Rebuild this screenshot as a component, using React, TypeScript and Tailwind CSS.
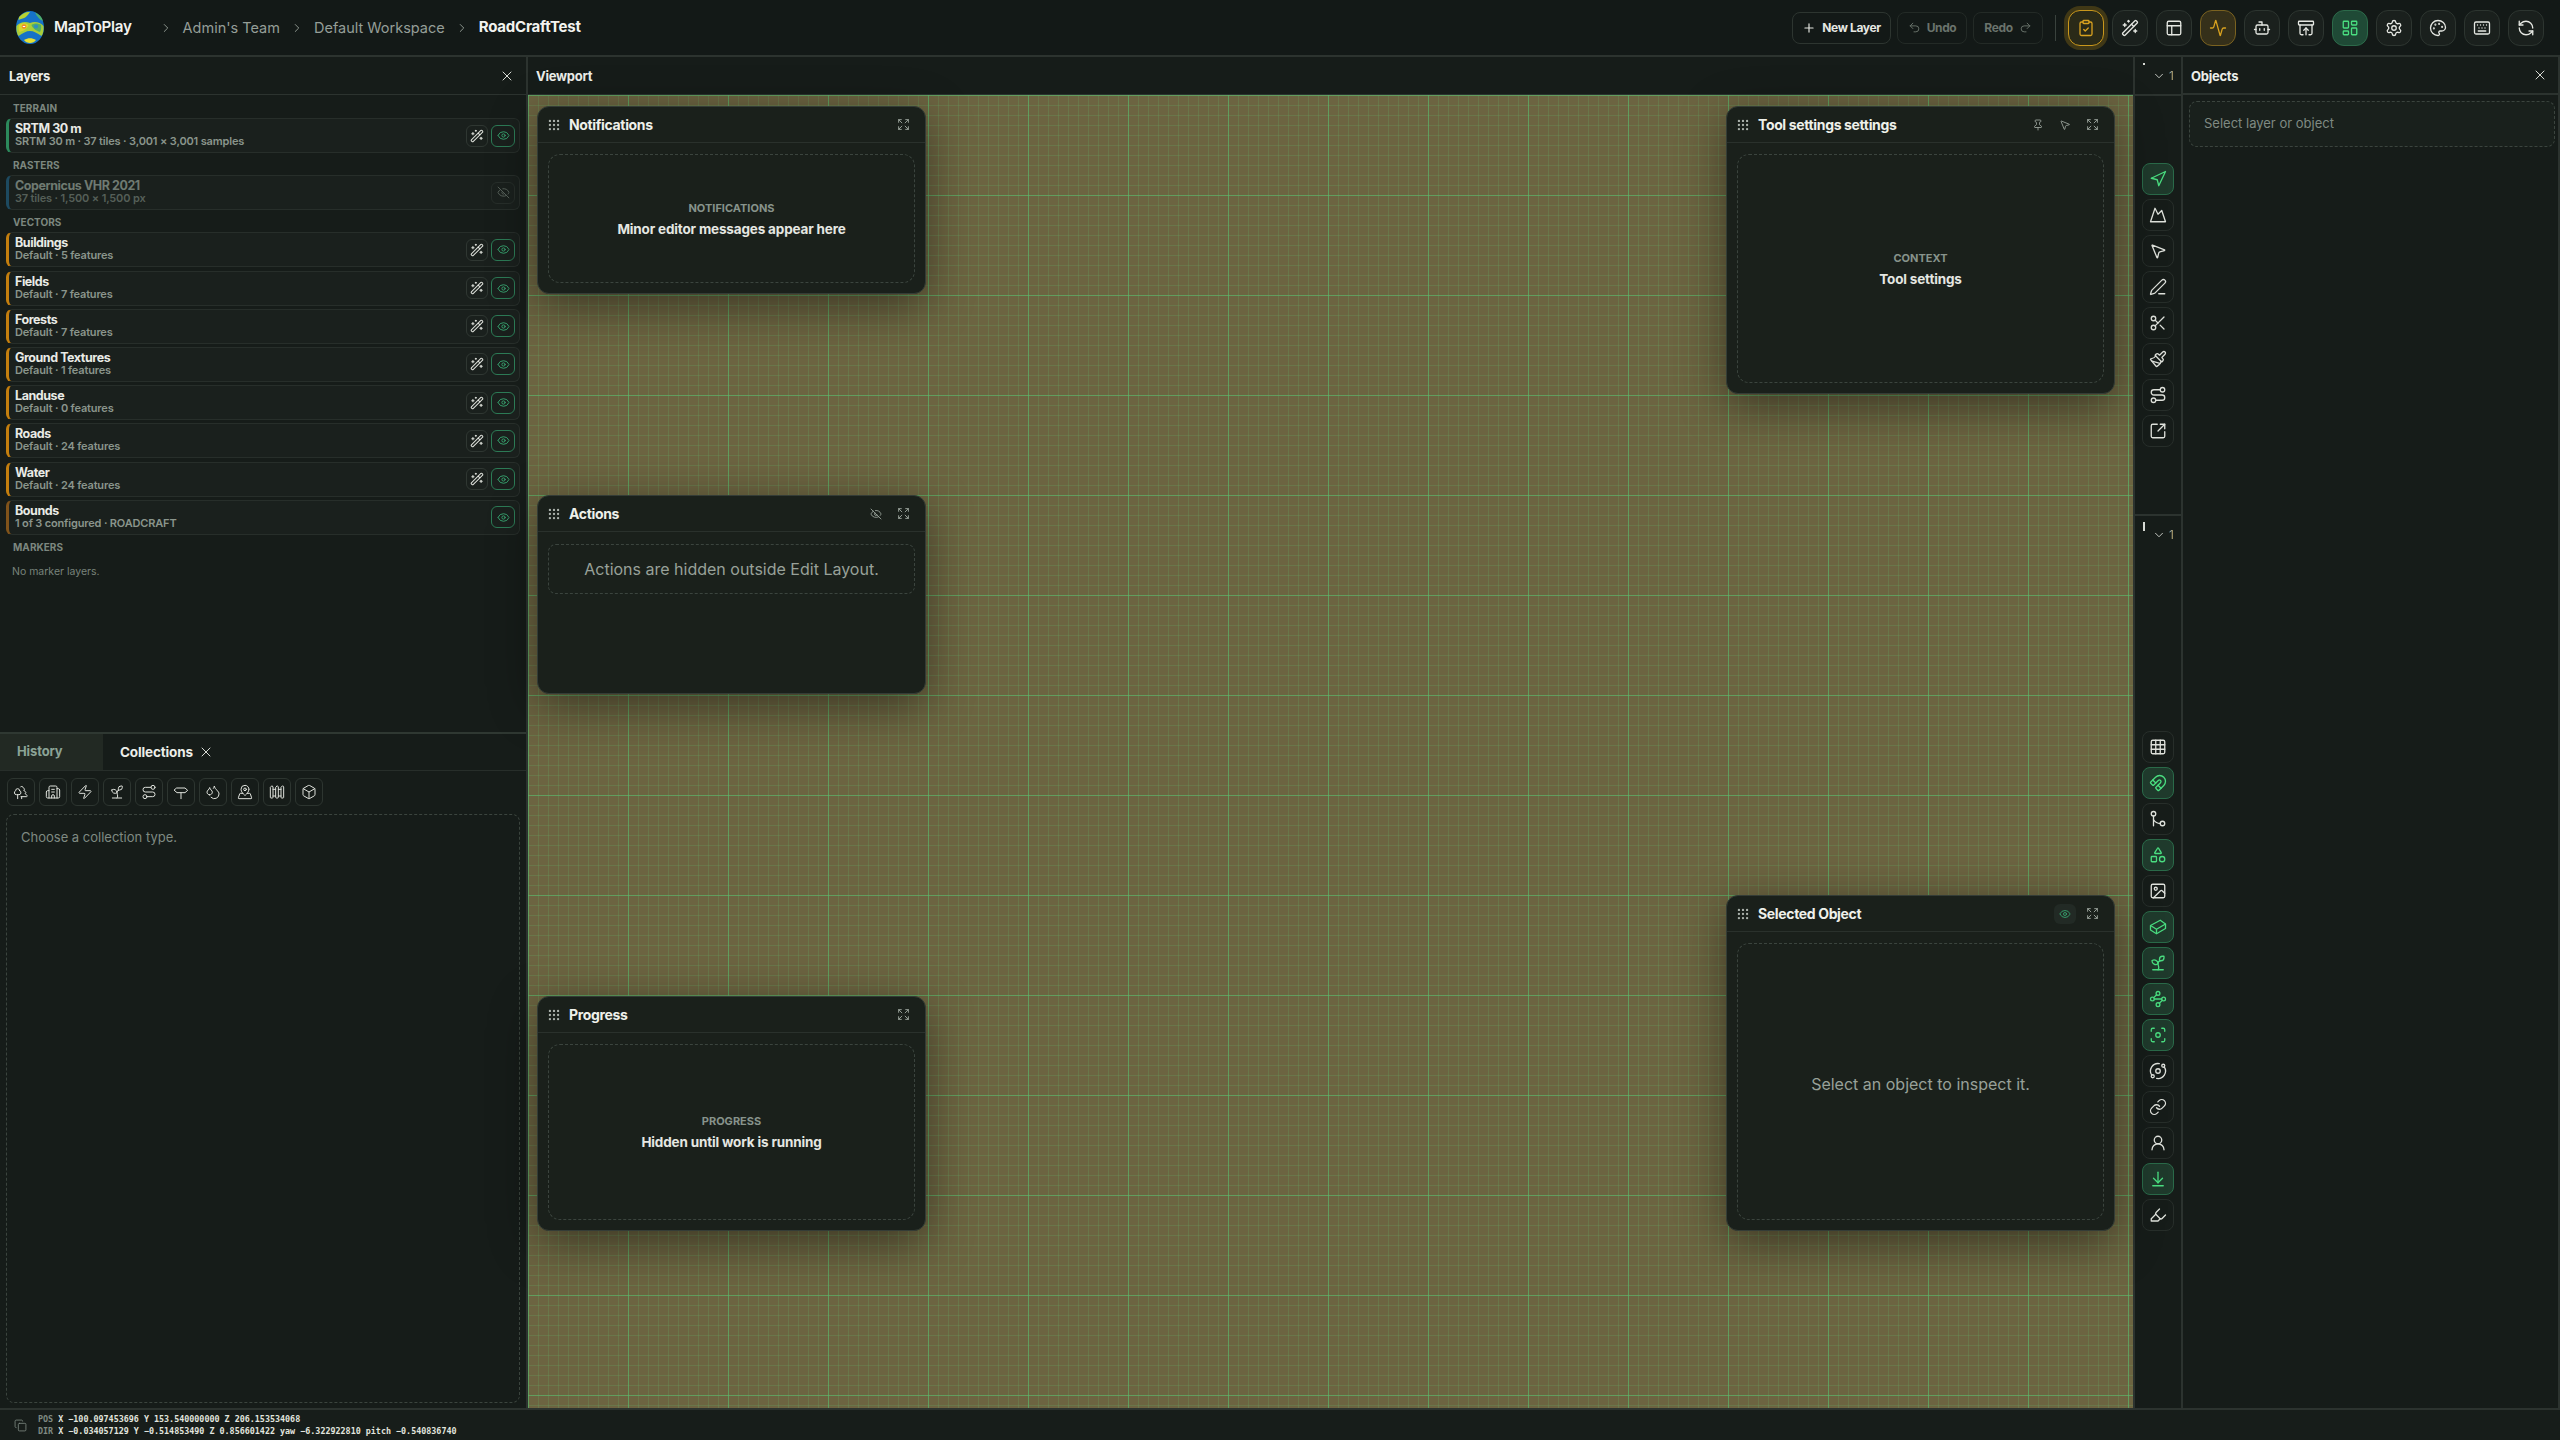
import React from 'react';
import {
  Plus, Undo2, Redo2, ClipboardCheck, WandSparkles, PanelsTopLeft, Activity, Bot, ArchiveRestore, LayoutDashboard,
  Settings, Palette, Keyboard, RefreshCcw, ChevronRight, ChevronDown, X, Eye, EyeOff, Grip, Expand, Pin, MousePointer2,
  Trees, Building2, Zap, Sprout, Route, Droplets, MapPinned, Fence, Box, Navigation, Mountain, PenLine, Scissors,
  Paintbrush, SquareArrowOutUpRight, Grid3x3, Magnet, Shapes, Image, Waypoints, Focus, Orbit, Link, UserRound, ArrowDownToLine,
  Highlighter, Copy,
} from 'lucide-react';

type IconT = React.ComponentType<{ size?: number; strokeWidth?: number; className?: string }>;

function Logo() {
  return (
    <svg width="28" height="33" viewBox="0 0 28 33" className="shrink-0">
      <ellipse cx="14" cy="16.5" rx="14" ry="16.5" fill="#1672c8" />
      <path d="M3 6 C7 1.5 11 0.5 14 1 C12 4 10 7 5 8 L2.5 9Z" fill="#b7d233" />
      <path d="M19 1.5 C23 3 26 6 27 10 C24 9 21 6 19 1.5Z" fill="#4fae6a" />
      <path d="M0.5 15 C4 11 9 10 14 12 C19 10 24 11 27.5 15 C28 19 27 23 25.5 25 C21 22 18 20 14 20 C10 20 7 22 2.5 25 C1 23 0 19 0.5 15Z" fill="#a9cd39" />
      <path d="M3 14 C6 11.5 10 12 12.5 14 C11 18 7 20 3.5 21 C2.5 19 2.5 16 3 14Z" fill="#d9d52e" />
      <path d="M15.5 14 C18 12 22 12 25 14 C25.5 17 25 19 24 21 C20 19.5 17 18 15.5 14Z" fill="#4fae6a" />
      <path d="M8 29 C12 26.5 16 26.5 20 29 C17.5 33 10.5 33 8 29Z" fill="#e6e034" />
      <circle cx="8" cy="15.5" r="2.3" fill="#f08a2a" />
      <circle cx="20" cy="15.5" r="2.1" fill="#2f8fc0" />
      <rect x="6.8" y="15" width="2.4" height="1" fill="#fff" />
    </svg>
  );
}

function Rule() {
  return <ChevronRight size={14} strokeWidth={1.5} className="text-[#9aa39c] shrink-0" />;
}

function TopIcon({ icon: I, kind }: { icon: IconT; kind?: 'amber' | 'amberSoft' | 'green' }) {
  const c =
    kind === 'amber'
      ? 'border-[#c9971c] bg-[#2a2a18] text-[#d9a21f] shadow-[0_0_0_4px_rgba(150,115,20,0.35)]'
      : kind === 'amberSoft'
      ? 'border-[#7a6220] bg-[#35301a] text-[#d9a21f]'
      : kind === 'green'
      ? 'border-[#2c6a4a] bg-[#1f4a36] text-[#4ade80]'
      : 'border-[#2d3530] bg-[#1a201d] text-[#e5e7e2]';
  return (
    <button className={`w-9 h-9 rounded-xl border flex items-center justify-center shrink-0 ${c}`}>
      <I size={18} strokeWidth={1.75} />
    </button>
  );
}

function TopBar() {
  return (
    <header className="h-[57px] shrink-0 flex items-center border-b-2 border-[#2c332f] bg-[#131917] pl-4 pr-[16px]">
      <Logo />
      <span className="ml-[10px] text-[15.2px] font-semibold tracking-[-0.02em] text-[#f2f3ef]">MapToPlay</span>
      <span className="ml-[27px]"><Rule /></span>
      <span className="ml-[10px] text-[14.5px] text-[#959e97]">Admin's Team</span>
      <span className="ml-[10px]"><Rule /></span>
      <span className="ml-[10px] text-[14.5px] text-[#959e97]">Default Workspace</span>
      <span className="ml-[10px]"><Rule /></span>
      <span className="ml-[10px] text-[15px] font-bold tracking-[-0.015em] text-[#f2f3ef]">RoadCraftTest</span>
      <div className="ml-auto flex items-center gap-[6px]">
        <button className="h-8 w-[99px] rounded-lg border border-[#2d3530] flex items-center justify-center gap-[6px] text-[12px] font-bold tracking-[-0.03em] text-[#e5e7e2]">
          <Plus size={14} strokeWidth={2} /> New Layer
        </button>
        <button className="h-8 w-[70px] rounded-lg border border-[#232a26] flex items-center justify-center gap-[6px] text-[12px] font-bold tracking-[-0.03em] text-[#6a736c]">
          <Undo2 size={13} strokeWidth={1.75} /> Undo
        </button>
        <button className="h-8 w-[70px] rounded-lg border border-[#232a26] flex items-center justify-center gap-[6px] text-[12px] font-bold tracking-[-0.03em] text-[#6a736c]">
          Redo <Redo2 size={13} strokeWidth={1.75} />
        </button>
        <div className="w-px h-[26px] bg-[#3a423d] mx-[6px]" />
        <div className="flex items-center gap-2">
          <TopIcon icon={ClipboardCheck} kind="amber" />
          <TopIcon icon={WandSparkles} />
          <TopIcon icon={PanelsTopLeft} />
          <TopIcon icon={Activity} kind="amberSoft" />
          <TopIcon icon={Bot} />
          <TopIcon icon={ArchiveRestore} />
          <TopIcon icon={LayoutDashboard} kind="green" />
          <TopIcon icon={Settings} />
          <TopIcon icon={Palette} />
          <TopIcon icon={Keyboard} />
          <TopIcon icon={RefreshCcw} />
        </div>
      </div>
    </header>
  );
}

function SectionLabel({ children }: { children: React.ReactNode }) {
  return (
    <div className="h-[19px] pl-[7px] flex items-center text-[10px] font-bold tracking-[0.005em] text-[#7c877f]">{children}</div>
  );
}

function LayerRow({
  name, sub, accent, dim, wand = true, off,
}: { name: string; sub: string; accent: string; dim?: boolean; wand?: boolean; off?: boolean }) {
  return (
    <div className={`h-[35px] rounded-md border border-[#272e2a] border-l-[3px] bg-[#1a201d] flex items-center pl-[6px] pr-[4px] mb-[3.2px] ${accent}`}>
      <div className="flex-1 min-w-0 leading-[13px] pb-[1px]">
        <div className={`text-[12.5px] font-bold tracking-[-0.035em] ${dim ? 'text-[#6f7a72]' : 'text-[#e9ebe6]'}`}>{name}</div>
        <div className={`text-[11px] font-semibold tracking-[-0.015em] ${dim ? 'text-[#555f58]' : 'text-[#8a958c]'}`}>{sub}</div>
      </div>
      {wand && (
        <button className="w-[22px] h-[22px] rounded-md border border-[#2f3732] flex items-center justify-center text-[#dfe2dc] mr-[3px]">
          <WandSparkles size={14} strokeWidth={1.75} />
        </button>
      )}
      {off ? (
        <button className="w-6 h-[22px] rounded-md border border-[#272e2a] flex items-center justify-center text-[#59635c]">
          <EyeOff size={13} strokeWidth={1.75} />
        </button>
      ) : (
        <button className="w-6 h-[22px] rounded-md border border-[#2c7a55] flex items-center justify-center text-[#37a36f]">
          <Eye size={13} strokeWidth={1.75} />
        </button>
      )}
    </div>
  );
}

function LayersPanel() {
  const amber = 'border-l-[#c47f0e]';
  return (
    <section className="h-[675px] shrink-0 flex flex-col">
      <div className="h-[38px] shrink-0 border-b border-[#2c332f] flex items-center justify-between pl-[9px] pr-[11px]">
        <span className="mt-[3px] text-[13px] font-bold tracking-[-0.02em] text-[#eceee9]">Layers</span>
        <X size={16} strokeWidth={1.5} className="text-[#d8dbd5]" />
      </div>
      <div className="flex-1 pl-[6px] pr-[6px] pt-[4px]">
        <SectionLabel>TERRAIN</SectionLabel>
        <LayerRow name="SRTM 30 m" sub="SRTM 30 m · 37 tiles · 3,001 × 3,001 samples" accent="border-l-[#2c8a5c]" />
        <SectionLabel>RASTERS</SectionLabel>
        <LayerRow name="Copernicus VHR 2021" sub="37 tiles · 1,500 × 1,500 px" accent="border-l-[#1d4a60]" dim wand={false} off />
        <SectionLabel>VECTORS</SectionLabel>
        <LayerRow name="Buildings" sub="Default · 5 features" accent={amber} />
        <LayerRow name="Fields" sub="Default · 7 features" accent={amber} />
        <LayerRow name="Forests" sub="Default · 7 features" accent={amber} />
        <LayerRow name="Ground Textures" sub="Default · 1 features" accent={amber} />
        <LayerRow name="Landuse" sub="Default · 0 features" accent={amber} />
        <LayerRow name="Roads" sub="Default · 24 features" accent={amber} />
        <LayerRow name="Water" sub="Default · 24 features" accent={amber} />
        <LayerRow name="Bounds" sub="1 of 3 configured · ROADCRAFT" accent="border-l-[#80531a]" wand={false} />
        <SectionLabel>MARKERS</SectionLabel>
        <div className="pl-[6px] pt-[7px] text-[10.5px] text-[#78837b]">No marker layers.</div>
      </div>
    </section>
  );
}

function SignIcon({ size = 16 }: { size?: number }) {
  return (
    <svg width={size} height={size} viewBox="0 0 24 24" fill="none" stroke="currentColor" strokeWidth="1.5" strokeLinecap="round" strokeLinejoin="round">
      <path d="M6 6h12l4 3.5-4 3.5H6L2 9.5z" />
      <path d="M12 13v9" />
    </svg>
  );
}

function CollectionsPanel() {
  const icons: IconT[] = [Trees, Building2, Zap, Sprout, Route, SignIcon as unknown as IconT, Droplets, MapPinned, Fence, Box];
  return (
    <section className="flex-1 min-h-0 flex flex-col border-t-2 border-[#2f3832]">
      <div className="h-[37px] shrink-0 flex border-b border-[#272e2a]">
        <div className="w-[103px] bg-[#222923] pl-[17px] flex items-center text-[13px] font-bold tracking-[-0.01em] text-[#8ba396]">History</div>
        <div className="pl-[17px] flex items-center gap-[5px] text-[13.5px] font-bold tracking-[-0.01em] text-[#eceee9]">
          Collections <X size={16} strokeWidth={1.5} className="text-[#d8dbd5]" />
        </div>
      </div>
      <div className="flex gap-1 pl-[7px] pt-[7px]">
        {icons.map((I, i) => (
          <button key={i} className="w-7 h-7 rounded-md border border-[#2d3530] flex items-center justify-center text-[#dfe2dc]">
            <I size={16} strokeWidth={1.5} />
          </button>
        ))}
      </div>
      <div className="mt-2 mx-[6px] mb-[5px] flex-1 rounded-lg border border-dashed border-[#3b443e] pl-[14px] pt-[13px] text-[13px] text-[#7f8a82]">
        Choose a collection type.
      </div>
    </section>
  );
}

function Win({ pos, title, icons, children }: { pos: string; title: string; icons: React.ReactNode; children: React.ReactNode }) {
  return (
    <div className={`absolute w-[389px] rounded-xl border border-[#343c36] bg-[#1a201b] shadow-[0_12px_48px_rgba(0,0,0,0.45)] flex flex-col ${pos}`}>
      <div className="h-[36px] shrink-0 border-b border-[#2a312c] flex items-center pl-[9px] pr-[15px]">
        <Grip size={14} strokeWidth={2} className="text-[#aab1ab] mr-[8px]" />
        <span className="flex-1 text-[14px] font-bold tracking-[-0.025em] text-[#eef0ea]">{title}</span>
        <div className="flex items-center gap-[15px] text-[#9aa39c]">{icons}</div>
      </div>
      {children}
    </div>
  );
}

function Placeholder({ label, text }: { label: string; text: string }) {
  return (
    <div className="mx-[10px] mt-[11px] mb-[10px] flex-1 rounded-xl border border-dashed border-[#3b443e] flex flex-col items-center justify-center gap-[6px]">
      <div className="text-[11px] leading-[14px] font-bold text-[#87938b]">{label}</div>
      <div className="text-[13.5px] leading-[16px] font-bold tracking-[-0.012em] text-[#e5e7e2]">{text}</div>
    </div>
  );
}

function Viewport() {
  const ex = <Expand size={13} strokeWidth={1.75} />;
  return (
    <section className="flex-1 min-w-0 flex flex-col border-l-2 border-[#2c332f]">
      <div className="h-[38px] shrink-0 border-b border-[#2c332f] flex items-center pl-[8px]">
        <span className="mt-[3px] text-[13px] font-bold tracking-[-0.02em] text-[#eceee9]">Viewport</span>
      </div>
      <div className="relative flex-1 bg-[#6c6441] bg-[linear-gradient(to_right,rgba(90,190,110,0.55)_1px,transparent_1px),linear-gradient(to_bottom,rgba(90,190,110,0.55)_1px,transparent_1px),linear-gradient(to_right,rgba(100,170,100,0.26)_1px,transparent_1px),linear-gradient(to_bottom,rgba(100,170,100,0.26)_1px,transparent_1px)] bg-[size:100px_100px,100px_100px,10px_10px,10px_10px]">
        <Win pos="left-[9px] top-[11px] h-[188px]" title="Notifications" icons={ex}>
          <Placeholder label="NOTIFICATIONS" text="Minor editor messages appear here" />
        </Win>
        <Win pos="left-[9px] top-[400px] h-[199px]" title="Actions" icons={<><EyeOff size={12} strokeWidth={1.75} />{ex}</>}>
          <div className="mx-[10px] mt-[12px] h-[50px] rounded-lg border border-dashed border-[#3b443e] flex items-center justify-center text-[16px] text-[#98a199]">
            Actions are hidden outside Edit Layout.
          </div>
        </Win>
        <Win pos="left-[9px] top-[901px] h-[235px]" title="Progress" icons={ex}>
          <Placeholder label="PROGRESS" text="Hidden until work is running" />
        </Win>
        <Win pos="right-[18px] top-[11px] h-[288px]" title="Tool settings settings" icons={<><Pin size={12} strokeWidth={1.75} /><MousePointer2 size={12} strokeWidth={1.75} />{ex}</>}>
          <Placeholder label="CONTEXT" text="Tool settings" />
        </Win>
        <Win pos="right-[18px] top-[800px] h-[336px]" title="Selected Object" icons={<><span className="w-[22px] h-[20px] -mr-[5px] rounded-md bg-[#222a25] flex items-center justify-center text-[#37a36f]"><Eye size={12} strokeWidth={1.75} /></span>{ex}</>}>
          <div className="mx-[10px] mt-[11px] mb-[10px] pt-[4px] flex-1 rounded-xl border border-dashed border-[#3b443e] flex items-center justify-center text-[16px] text-[#98a199]">
            Select an object to inspect it.
          </div>
        </Win>
      </div>
    </section>
  );
}

function ConnectorIcon({ size = 18 }: { size?: number }) {
  return (
    <svg width={size} height={size} viewBox="0 0 24 24" fill="none" stroke="currentColor" strokeWidth="1.75" strokeLinecap="round">
      <circle cx="6" cy="5" r="3" />
      <path d="M6 8v13" />
      <path d="M6 13c2 3 6 5 9 5" />
      <circle cx="18" cy="18" r="3" />
    </svg>
  );
}

function SlabIcon({ size = 18 }: { size?: number }) {
  return (
    <svg width={size} height={size} viewBox="0 0 24 24" fill="none" stroke="currentColor" strokeWidth="1.75" strokeLinejoin="round">
      <path d="M15 3l7 5v6l-12 7-8-5v-6z" />
      <path d="M2 10l8 5 12-7M10 15v6" />
    </svg>
  );
}

function ToolBtn({ icon: I, on, custom }: { icon?: IconT; on?: boolean; custom?: React.ReactNode }) {
  return (
    <button className={`w-8 h-8 shrink-0 rounded-lg border flex items-center justify-center ${on ? 'border-[#2a6a49] bg-[#1f3a2c] text-[#4ade80]' : 'border-[#272e2a] text-[#dfe2dc]'}`}>
      {custom ?? (I && <I size={18} strokeWidth={1.75} />)}
    </button>
  );
}

function OneMark({ tick }: { tick: string }) {
  return (
    <div className="h-[37px] shrink-0 relative flex items-center justify-end pr-[7px] gap-[3px]">
      <span className={`absolute left-[8px] top-[6px] w-[2px] bg-[#d8dbd5] ${tick}`} />
      <ChevronDown size={14} strokeWidth={1.5} className="text-[#d8dbd5]" />
      <span className="text-[12px] bg-[linear-gradient(to_right,#6fa8d8,#d9a94a)] bg-clip-text text-transparent">1</span>
    </div>
  );
}

function ToolStrip() {
  return (
    <aside className="w-[50px] shrink-0 flex flex-col border-l-2 border-r-2 border-[#2c332f] bg-[#161c19]">
      <div className="border-b-2 border-[#2c332f]"><OneMark tick="h-[2px]" /></div>
      <div className="h-[418px] shrink-0 flex flex-col items-center gap-1 pt-[67px]">
        <ToolBtn icon={Navigation} on />
        <ToolBtn icon={Mountain} />
        <ToolBtn icon={MousePointer2} />
        <ToolBtn icon={PenLine} />
        <ToolBtn icon={Scissors} />
        <ToolBtn icon={Paintbrush} />
        <ToolBtn icon={Route} />
        <ToolBtn icon={SquareArrowOutUpRight} />
      </div>
      <div className="border-t-2 border-[#2c332f]"><OneMark tick="h-[9px]" /></div>
      <div className="flex-1 flex flex-col items-center gap-1 pt-[178px]">
        <ToolBtn icon={Grid3x3} />
        <ToolBtn icon={Magnet} on />
        <ToolBtn custom={<ConnectorIcon />} />
        <ToolBtn icon={Shapes} on />
        <ToolBtn icon={Image} />
        <ToolBtn custom={<SlabIcon />} on />
        <ToolBtn icon={Sprout} on />
        <ToolBtn icon={Waypoints} on />
        <ToolBtn icon={Focus} on />
        <ToolBtn icon={Orbit} />
        <ToolBtn icon={Link} />
        <ToolBtn icon={UserRound} />
        <ToolBtn icon={ArrowDownToLine} on />
        <ToolBtn icon={Highlighter} />
      </div>
    </aside>
  );
}

function Objects() {
  return (
    <aside className="w-[377px] shrink-0 flex flex-col border-r-2 border-[#2c332f]">
      <div className="h-[38px] shrink-0 border-b-2 border-[#2c332f] flex items-center justify-between pl-[8px] pr-[10px]">
        <span className="mt-[3px] text-[13px] font-bold tracking-[-0.02em] text-[#eceee9]">Objects</span>
        <X size={16} strokeWidth={1.5} className="text-[#d8dbd5]" />
      </div>
      <div className="mt-[6px] ml-[6px] mr-[3px] h-[46px] rounded-lg border border-dashed border-[#3b443e] bg-[#19201c] flex items-center pl-[14px] text-[13px] text-[#7f8a82]">
        Select layer or object
      </div>
    </aside>
  );
}

function Status() {
  return (
    <footer className="h-[32px] shrink-0 flex items-center border-t-2 border-[#2c332f] bg-[#171d1a] pl-[14px]">
      <Copy size={13} strokeWidth={1.5} className="text-[#7f8a82] shrink-0" />
      <div className="ml-[11px] font-[family-name:'DejaVu_Sans_Mono',monospace] text-[8.4px] leading-[12px] font-bold text-[#e1e4de] whitespace-pre">
        <div><span className="text-[#7f8a82]">POS</span> X −100.097453696 Y 153.540000000 Z 206.153534068</div>
        <div><span className="text-[#7f8a82]">DIR</span> X −0.034057129 Y −0.514853490 Z 0.856601422 yaw −6.322922810 pitch −0.540836740</div>
      </div>
    </footer>
  );
}

export default function App() {
  return (
    <div className="w-[2560px] h-[1440px] flex flex-col overflow-hidden bg-[#161c19] font-[family-name:Inter,sans-serif]">
      <TopBar />
      <main className="flex-1 min-h-0 flex">
        <div className="w-[526px] shrink-0 flex flex-col">
          <LayersPanel />
          <CollectionsPanel />
        </div>
        <Viewport />
        <ToolStrip />
        <Objects />
      </main>
      <Status />
    </div>
  );
}
